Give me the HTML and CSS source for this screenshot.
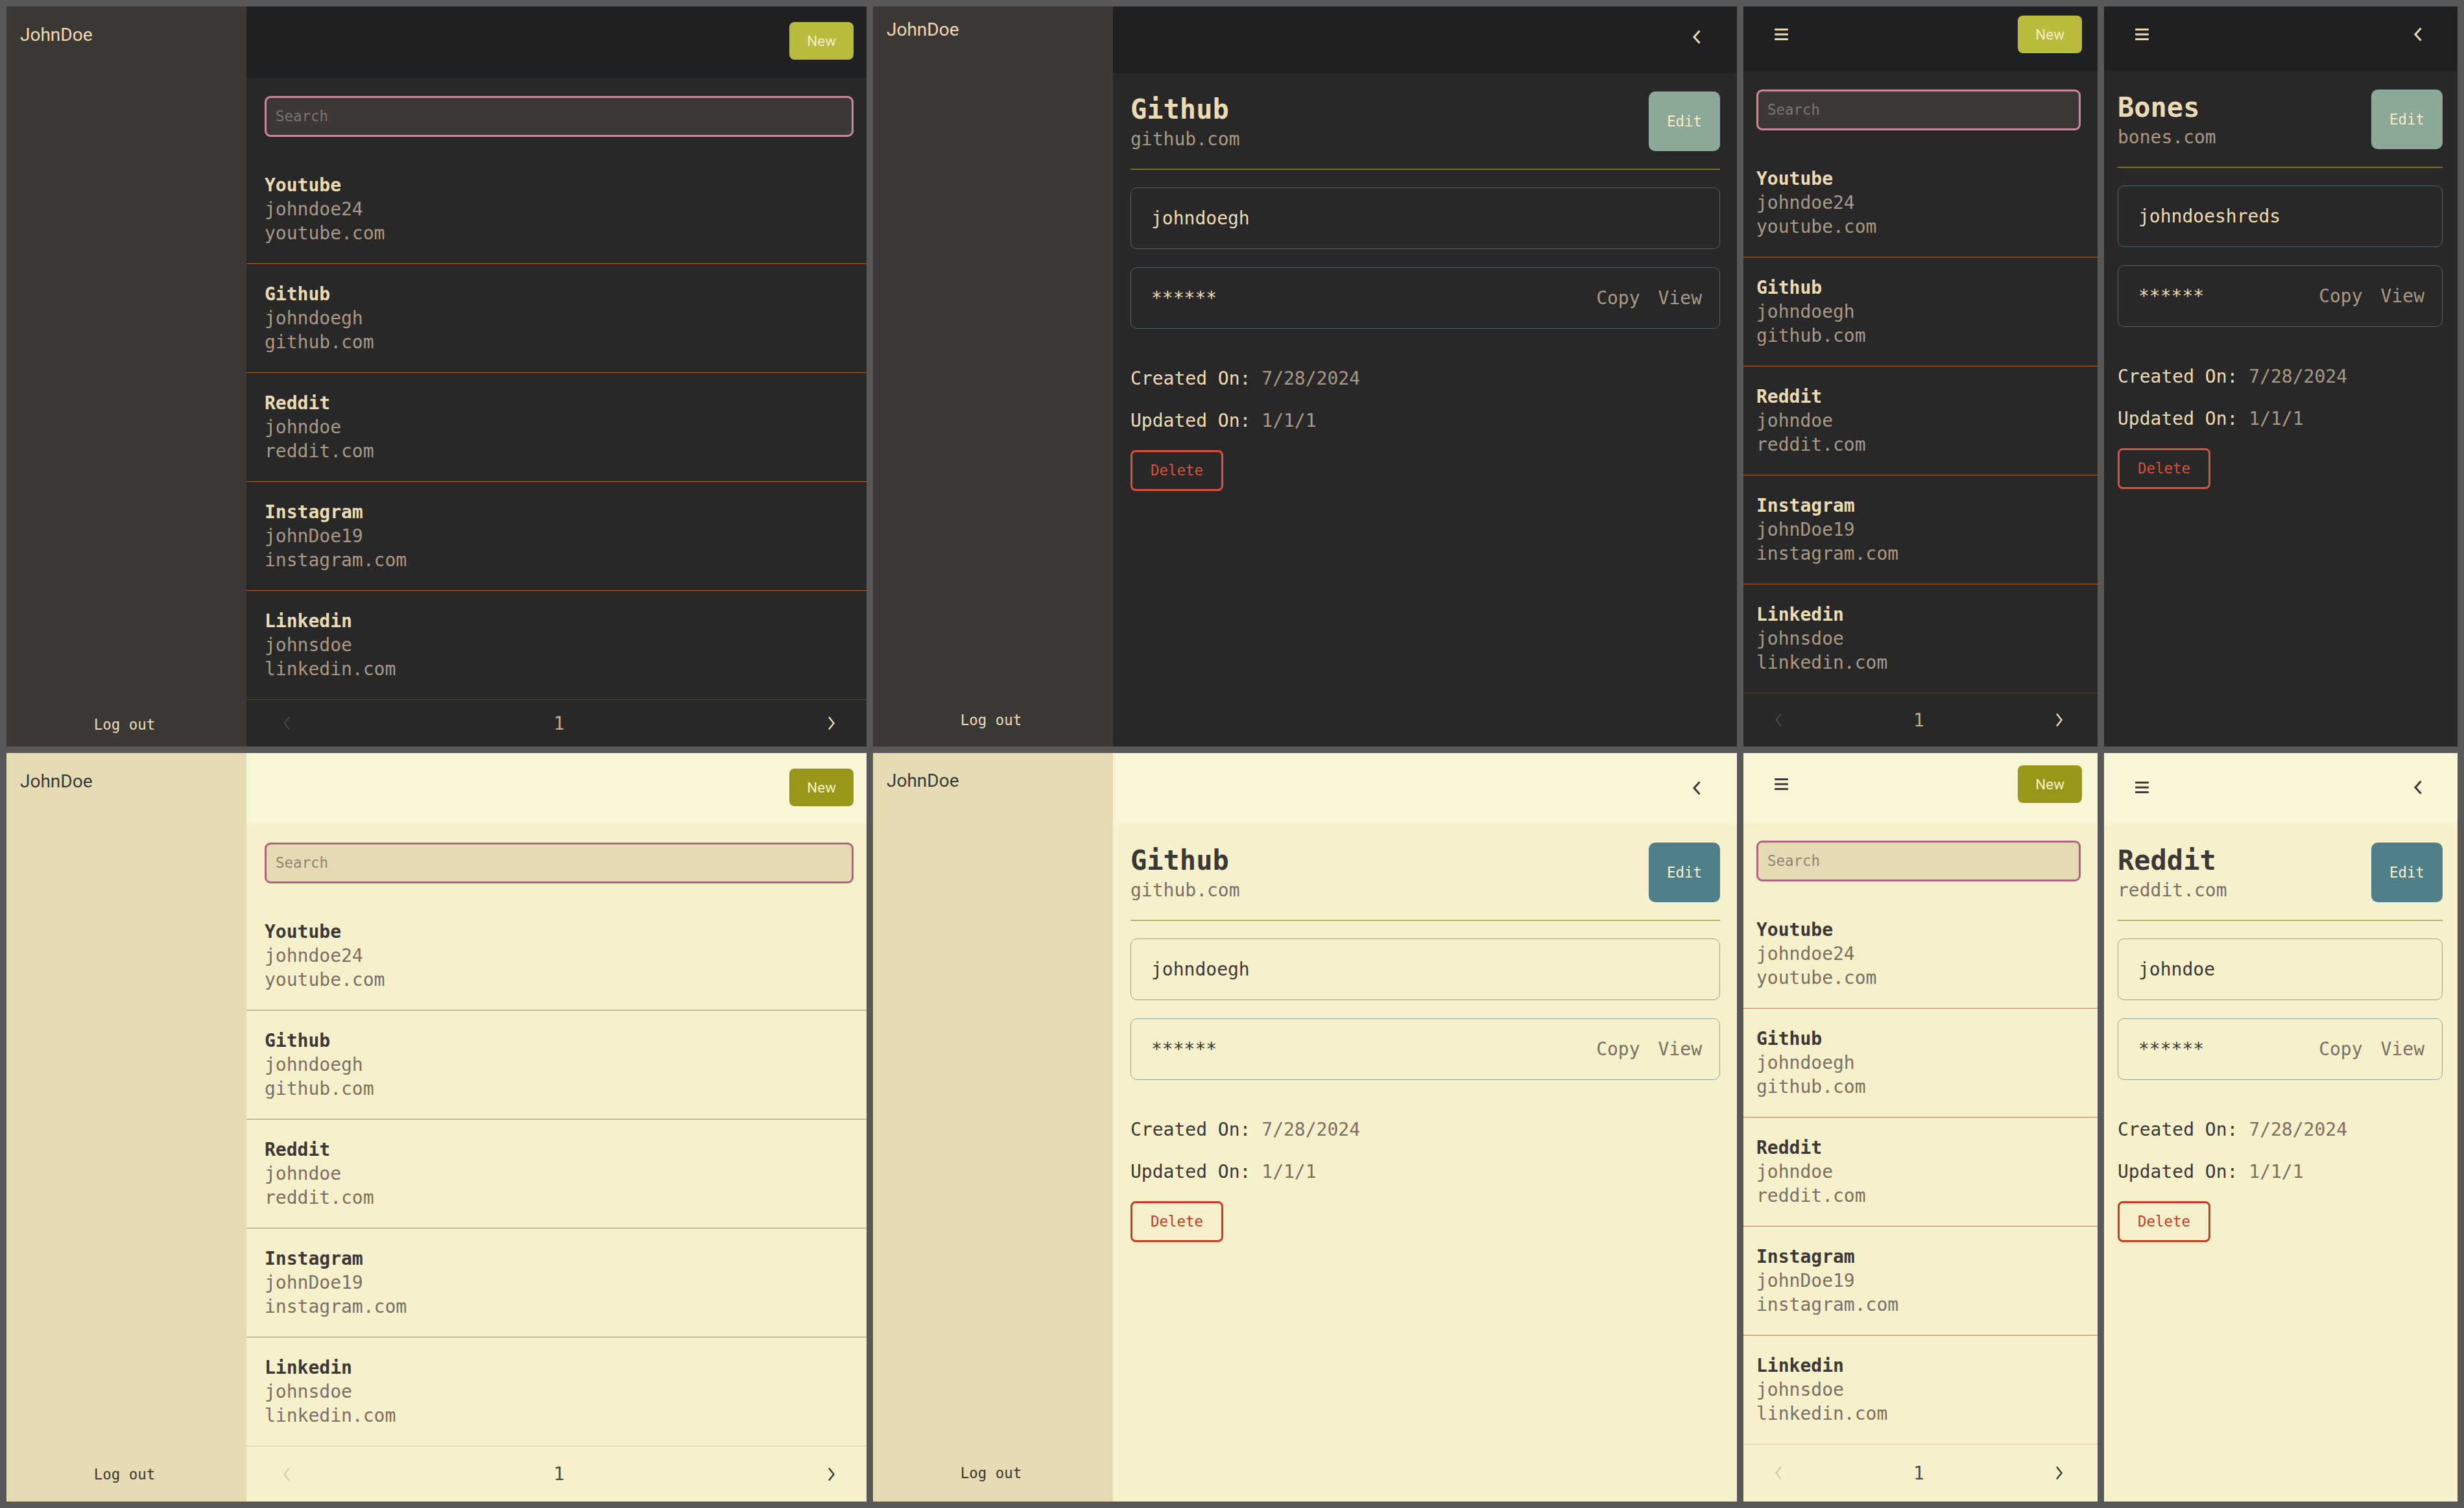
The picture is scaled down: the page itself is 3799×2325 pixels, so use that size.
FILE: index.html
```html
<!DOCTYPE html>
<html lang="en">
<head>
<meta charset="utf-8">
<title>Password manager</title>
<link rel="stylesheet" href="styles.css">
</head>
<body>
<div class="board">

  <!-- 1: dark desktop list -->
  <section class="app dark desk-list">
    <aside class="side"><div class="side__user">JohnDoe</div><div class="side__logout">Log out</div></aside>
    <div class="main">
      <header class="bar bar--end"><div class="bar__slot"><button class="btn btn--new">New</button></div></header>
      <div class="search"><div class="search__box">Search</div></div>
      <ul class="list">
        <li class="item"><div class="item__name">Youtube</div><div class="item__sub">johndoe24</div><div class="item__sub">youtube.com</div></li>
        <li class="item"><div class="item__name">Github</div><div class="item__sub">johndoegh</div><div class="item__sub">github.com</div></li>
        <li class="item"><div class="item__name">Reddit</div><div class="item__sub">johndoe</div><div class="item__sub">reddit.com</div></li>
        <li class="item"><div class="item__name">Instagram</div><div class="item__sub">johnDoe19</div><div class="item__sub">instagram.com</div></li>
        <li class="item"><div class="item__name">Linkedin</div><div class="item__sub">johnsdoe</div><div class="item__sub">linkedin.com</div></li>
      </ul>
      <nav class="pager">
        <span class="pager__prev"><svg width="12" height="22" viewBox="0 0 12 22"><path d="M10 1.5 L2.5 11 L10 20.5" fill="none" stroke="currentColor" stroke-width="2"/></svg></span>
        <span class="pager__num">1</span>
        <span class="pager__next"><svg width="12" height="22" viewBox="0 0 12 22"><path d="M2 1.5 L9.5 11 L2 20.5" fill="none" stroke="currentColor" stroke-width="2.4"/></svg></span>
      </nav>
    </div>
  </section>

  <!-- 2: dark desktop detail -->
  <section class="app dark desk-detail">
    <aside class="side"><div class="side__user">JohnDoe</div><div class="side__logout">Log out</div></aside>
    <div class="main">
      <header class="bar bar--end"><div class="bar__slot"><svg class="chev" width="14" height="22" viewBox="0 0 14 22"><path d="M11.5 1.5 L3 11 L11.5 20.5" fill="none" stroke="currentColor" stroke-width="3"/></svg></div></header>
      <div class="detail">
        <div class="detail__head">
          <div class="detail__titles"><div class="detail__title">Github</div><div class="detail__url">github.com</div></div>
          <button class="btn btn--edit">Edit</button>
        </div>
        <div class="divider"></div>
        <div class="field">johndoegh</div>
        <div class="field"><span>******</span><span class="field__actions"><span>Copy</span><span>View</span></span></div>
        <div class="meta">
          <div class="meta__row">Created On: <span class="meta__val">7/28/2024</span></div>
          <div class="meta__row">Updated On: <span class="meta__val">1/1/1</span></div>
        </div>
        <button class="btn btn--delete">Delete</button>
      </div>
    </div>
  </section>

  <!-- 3: dark mobile list -->
  <section class="app dark mob-list">
    <div class="main">
      <header class="bar"><div class="bar__slot"><svg class="burger" width="21" height="18" viewBox="0 0 21 18"><rect x="0" y="0" width="21" height="3" rx="1"/><rect x="0" y="7.5" width="21" height="3" rx="1"/><rect x="0" y="15" width="21" height="3" rx="1"/></svg></div><div class="bar__slot"><button class="btn btn--new">New</button></div></header>
      <div class="search"><div class="search__box">Search</div></div>
      <ul class="list">
        <li class="item"><div class="item__name">Youtube</div><div class="item__sub">johndoe24</div><div class="item__sub">youtube.com</div></li>
        <li class="item"><div class="item__name">Github</div><div class="item__sub">johndoegh</div><div class="item__sub">github.com</div></li>
        <li class="item"><div class="item__name">Reddit</div><div class="item__sub">johndoe</div><div class="item__sub">reddit.com</div></li>
        <li class="item"><div class="item__name">Instagram</div><div class="item__sub">johnDoe19</div><div class="item__sub">instagram.com</div></li>
        <li class="item"><div class="item__name">Linkedin</div><div class="item__sub">johnsdoe</div><div class="item__sub">linkedin.com</div></li>
      </ul>
      <nav class="pager">
        <span class="pager__prev"><svg width="12" height="22" viewBox="0 0 12 22"><path d="M10 1.5 L2.5 11 L10 20.5" fill="none" stroke="currentColor" stroke-width="2"/></svg></span>
        <span class="pager__num">1</span>
        <span class="pager__next"><svg width="12" height="22" viewBox="0 0 12 22"><path d="M2 1.5 L9.5 11 L2 20.5" fill="none" stroke="currentColor" stroke-width="2.4"/></svg></span>
      </nav>
    </div>
  </section>

  <!-- 4: dark mobile detail -->
  <section class="app dark mob-detail">
    <div class="main">
      <header class="bar"><div class="bar__slot"><svg class="burger" width="21" height="18" viewBox="0 0 21 18"><rect x="0" y="0" width="21" height="3" rx="1"/><rect x="0" y="7.5" width="21" height="3" rx="1"/><rect x="0" y="15" width="21" height="3" rx="1"/></svg></div><div class="bar__slot"><svg class="chev" width="14" height="22" viewBox="0 0 14 22"><path d="M11.5 1.5 L3 11 L11.5 20.5" fill="none" stroke="currentColor" stroke-width="3"/></svg></div></header>
      <div class="detail">
        <div class="detail__head">
          <div class="detail__titles"><div class="detail__title">Bones</div><div class="detail__url">bones.com</div></div>
          <button class="btn btn--edit">Edit</button>
        </div>
        <div class="divider"></div>
        <div class="field">johndoeshreds</div>
        <div class="field"><span>******</span><span class="field__actions"><span>Copy</span><span>View</span></span></div>
        <div class="meta">
          <div class="meta__row">Created On: <span class="meta__val">7/28/2024</span></div>
          <div class="meta__row">Updated On: <span class="meta__val">1/1/1</span></div>
        </div>
        <button class="btn btn--delete">Delete</button>
      </div>
    </div>
  </section>

  <!-- 5: light desktop list -->
  <section class="app light desk-list desk-list--low">
    <aside class="side"><div class="side__user">JohnDoe</div><div class="side__logout">Log out</div></aside>
    <div class="main">
      <header class="bar bar--end"><div class="bar__slot"><button class="btn btn--new">New</button></div></header>
      <div class="search"><div class="search__box">Search</div></div>
      <ul class="list">
        <li class="item"><div class="item__name">Youtube</div><div class="item__sub">johndoe24</div><div class="item__sub">youtube.com</div></li>
        <li class="item"><div class="item__name">Github</div><div class="item__sub">johndoegh</div><div class="item__sub">github.com</div></li>
        <li class="item"><div class="item__name">Reddit</div><div class="item__sub">johndoe</div><div class="item__sub">reddit.com</div></li>
        <li class="item"><div class="item__name">Instagram</div><div class="item__sub">johnDoe19</div><div class="item__sub">instagram.com</div></li>
        <li class="item"><div class="item__name">Linkedin</div><div class="item__sub">johnsdoe</div><div class="item__sub">linkedin.com</div></li>
      </ul>
      <nav class="pager">
        <span class="pager__prev"><svg width="12" height="22" viewBox="0 0 12 22"><path d="M10 1.5 L2.5 11 L10 20.5" fill="none" stroke="currentColor" stroke-width="2"/></svg></span>
        <span class="pager__num">1</span>
        <span class="pager__next"><svg width="12" height="22" viewBox="0 0 12 22"><path d="M2 1.5 L9.5 11 L2 20.5" fill="none" stroke="currentColor" stroke-width="2.4"/></svg></span>
      </nav>
    </div>
  </section>

  <!-- 6: light desktop detail -->
  <section class="app light desk-detail desk-detail--low">
    <aside class="side"><div class="side__user">JohnDoe</div><div class="side__logout">Log out</div></aside>
    <div class="main">
      <header class="bar bar--end"><div class="bar__slot"><svg class="chev" width="14" height="22" viewBox="0 0 14 22"><path d="M11.5 1.5 L3 11 L11.5 20.5" fill="none" stroke="currentColor" stroke-width="3"/></svg></div></header>
      <div class="detail">
        <div class="detail__head">
          <div class="detail__titles"><div class="detail__title">Github</div><div class="detail__url">github.com</div></div>
          <button class="btn btn--edit">Edit</button>
        </div>
        <div class="divider"></div>
        <div class="field">johndoegh</div>
        <div class="field"><span>******</span><span class="field__actions"><span>Copy</span><span>View</span></span></div>
        <div class="meta">
          <div class="meta__row">Created On: <span class="meta__val">7/28/2024</span></div>
          <div class="meta__row">Updated On: <span class="meta__val">1/1/1</span></div>
        </div>
        <button class="btn btn--delete">Delete</button>
      </div>
    </div>
  </section>

  <!-- 7: light mobile list -->
  <section class="app light mob-list mob-list--low">
    <div class="main">
      <header class="bar"><div class="bar__slot"><svg class="burger" width="21" height="18" viewBox="0 0 21 18"><rect x="0" y="0" width="21" height="3" rx="1"/><rect x="0" y="7.5" width="21" height="3" rx="1"/><rect x="0" y="15" width="21" height="3" rx="1"/></svg></div><div class="bar__slot"><button class="btn btn--new">New</button></div></header>
      <div class="search"><div class="search__box">Search</div></div>
      <ul class="list">
        <li class="item"><div class="item__name">Youtube</div><div class="item__sub">johndoe24</div><div class="item__sub">youtube.com</div></li>
        <li class="item"><div class="item__name">Github</div><div class="item__sub">johndoegh</div><div class="item__sub">github.com</div></li>
        <li class="item"><div class="item__name">Reddit</div><div class="item__sub">johndoe</div><div class="item__sub">reddit.com</div></li>
        <li class="item"><div class="item__name">Instagram</div><div class="item__sub">johnDoe19</div><div class="item__sub">instagram.com</div></li>
        <li class="item"><div class="item__name">Linkedin</div><div class="item__sub">johnsdoe</div><div class="item__sub">linkedin.com</div></li>
      </ul>
      <nav class="pager">
        <span class="pager__prev"><svg width="12" height="22" viewBox="0 0 12 22"><path d="M10 1.5 L2.5 11 L10 20.5" fill="none" stroke="currentColor" stroke-width="2"/></svg></span>
        <span class="pager__num">1</span>
        <span class="pager__next"><svg width="12" height="22" viewBox="0 0 12 22"><path d="M2 1.5 L9.5 11 L2 20.5" fill="none" stroke="currentColor" stroke-width="2.4"/></svg></span>
      </nav>
    </div>
  </section>

  <!-- 8: light mobile detail -->
  <section class="app light mob-detail mob-detail--low">
    <div class="main">
      <header class="bar"><div class="bar__slot"><svg class="burger" width="21" height="18" viewBox="0 0 21 18"><rect x="0" y="0" width="21" height="3" rx="1"/><rect x="0" y="7.5" width="21" height="3" rx="1"/><rect x="0" y="15" width="21" height="3" rx="1"/></svg></div><div class="bar__slot"><svg class="chev" width="14" height="22" viewBox="0 0 14 22"><path d="M11.5 1.5 L3 11 L11.5 20.5" fill="none" stroke="currentColor" stroke-width="3"/></svg></div></header>
      <div class="detail">
        <div class="detail__head">
          <div class="detail__titles"><div class="detail__title">Reddit</div><div class="detail__url">reddit.com</div></div>
          <button class="btn btn--edit">Edit</button>
        </div>
        <div class="divider"></div>
        <div class="field">johndoe</div>
        <div class="field"><span>******</span><span class="field__actions"><span>Copy</span><span>View</span></span></div>
        <div class="meta">
          <div class="meta__row">Created On: <span class="meta__val">7/28/2024</span></div>
          <div class="meta__row">Updated On: <span class="meta__val">1/1/1</span></div>
        </div>
        <button class="btn btn--delete">Delete</button>
      </div>
    </div>
  </section>

</div>
</body>
</html>
```

FILE: styles.css
```css
* { box-sizing: border-box; margin: 0; padding: 0; }

html, body { width: 3799px; height: 2325px; overflow: hidden; }

body {
  background: #585858;
  font-family: "DejaVu Sans Mono", "Liberation Mono", monospace;
  font-size: 28px;
  line-height: 37px;
}

.board {
  display: grid;
  grid-template-columns: 1326px 1332px 546px 545px;
  grid-template-rows: 1141px 1154px;
  gap: 10px;
  padding: 10px;
  height: 2325px;
}

/* themes */
.dark {
  --side: #3c3836;
  --head: #1f2022;
  --main: #282828;
  --fg: #ebdbb2;
  --muted: #a89984;
  --sep: #b0602c;
  --pager-line: #4e3f33;
  --pager-num: #bdae93;
  --pager-dim: #4f4945;
  --search-bg: #3c3836;
  --search-border: #c98a9e;
  --placeholder: #7c746c;
  --new: #b8bb3c;
  --new-fg: #f4edc9;
  --edit: #8ea898;
  --edit-fg: #f4ebc4;
  --olive: #77741c;
  --field: #4d6667;
  --red: #dc4f38;
}

.light {
  --side: #e5dcb3;
  --head: #f9f5d7;
  --main: #f6f0cb;
  --fg: #3c3836;
  --muted: #7c6f64;
  --sep: #b9805a;
  --pager-line: #d8c8a4;
  --pager-num: #504945;
  --pager-dim: #d5c6a1;
  --search-bg: #e5dbb3;
  --search-border: #b16286;
  --placeholder: #928374;
  --new: #98971a;
  --new-fg: #f7f0cc;
  --edit: #4f7f89;
  --edit-fg: #f7f0cc;
  --olive: #b5b06a;
  --field: #8fa7a2;
  --red: #cc3a26;
}

/* per-layout metrics */
.desk-list {
  --side-pt: 25px; --side-pb: 19px;
  --bar-h: 110px; --bar-pt: 24px; --bar-pr: 20px; --bar-pl: 28px;
  --pl: 28px; --pr: 20px;
  --pg-pl: 56px; --pg-pr: 48px;
}
.desk-list--low { --side-pb: 27px; }
.desk-detail {
  --side-pt: 17px; --side-pb: 26px;
  --bar-h: 103px; --bar-pt: 18px; --bar-pr: 55px; --bar-pl: 28px;
  --pl: 27px; --pr: 26px;
}
.desk-detail--low {
  --side-pt: 24px; --side-pb: 29px;
  --bar-h: 110px; --bar-pt: 25px;
}
.mob-list {
  --bar-h: 100px; --bar-pt: 14px; --bar-pr: 24px; --bar-pl: 48px;
  --pl: 20px; --pr: 26px;
  --pg-pl: 48px; --pg-pr: 53px;
}
.mob-list--low { --bar-h: 107px; --bar-pt: 19px; }
.mob-detail {
  --bar-h: 100px; --bar-pt: 14px; --bar-pr: 54px; --bar-pl: 48px;
  --pl: 21px; --pr: 23px;
}
.mob-detail--low { --bar-h: 110px; --bar-pt: 24px; }

.app {
  display: flex;
  overflow: hidden;
  background: var(--main);
  color: var(--fg);
}

/* sidebar */
.side {
  width: 370px;
  flex: none;
  background: var(--side);
  display: flex;
  flex-direction: column;
  justify-content: space-between;
  padding: var(--side-pt) 0 var(--side-pb) 0;
}
.side__user {
  font-family: Roboto, "Noto Sans", sans-serif;
  font-size: 28px;
  line-height: 37px;
  padding-left: 21px;
}
.side__logout {
  font-size: 22.4px;
  line-height: 29px;
  text-align: center;
  padding-right: 6px;
}

/* main column */
.main {
  flex: 1;
  min-width: 0;
  display: flex;
  flex-direction: column;
}

.bar {
  flex: none;
  height: var(--bar-h);
  background: var(--head);
  display: flex;
  justify-content: space-between;
  align-items: flex-start;
  padding: var(--bar-pt) var(--bar-pr) 0 var(--bar-pl);
}
.bar--end { justify-content: flex-end; }
.bar__slot {
  height: 58px;
  display: flex;
  align-items: center;
}
.burger { fill: var(--fg); display: block; }
.chev { color: var(--fg); display: block; }

/* buttons */
.btn {
  border: none;
  font: inherit;
  font-size: 22.4px;
  line-height: 30px;
  border-radius: 8px;
  cursor: pointer;
}
.btn--new {
  font-family: Roboto, "Noto Sans", sans-serif;
  background: var(--new);
  color: var(--new-fg);
  padding: 14px 27px;
  height: 58px;
}
.btn--edit {
  background: var(--edit);
  color: var(--edit-fg);
  padding: 0 28px;
  border-radius: 10px;
  display: flex;
  align-items: center;
}
.btn--delete {
  display: block;
  margin-top: 27px;
  background: transparent;
  border: 3px solid var(--red);
  color: var(--red);
  padding: 14px 28px;
  line-height: 29px;
}

/* search */
.search {
  flex: none;
  padding: 28px var(--pr) 28px var(--pl);
}
.search__box {
  height: 63px;
  border: 3px solid var(--search-border);
  border-radius: 9px;
  background: var(--search-bg);
  padding: 14px;
  font-size: 22.4px;
  line-height: 29px;
  color: var(--placeholder);
}

/* list */
.list { list-style: none; flex: none; }
.item {
  padding: 28px var(--pr) 28px var(--pl);
  border-bottom: 1px solid var(--sep);
}
.item:last-child { border-bottom: none; }
.item__name { font-weight: bold; }
.item__sub { color: var(--muted); }

/* pager */
.pager {
  flex: 1;
  border-top: 1px solid var(--pager-line);
  display: flex;
  align-items: center;
  justify-content: space-between;
  padding: 0 var(--pg-pr) 0 var(--pg-pl);
}
.pager svg { display: block; }
.pager__prev { color: var(--pager-dim); }
.pager__next { color: var(--fg); }
.pager__num { color: var(--pager-num); }

/* detail */
.detail {
  padding: 28px var(--pr) 0 var(--pl);
}
.detail__head {
  display: flex;
  justify-content: space-between;
  align-items: stretch;
}
.detail__title {
  font-size: 42px;
  line-height: 55px;
  font-weight: bold;
}
.detail__url { color: var(--muted); }
.divider {
  height: 2px;
  background: var(--olive);
  margin: 27px 0 27px;
}
.field {
  height: 95px;
  border: 1px solid var(--field);
  border-radius: 10px;
  padding: 28px 27px 28px 31px;
  display: flex;
  justify-content: space-between;
}
.field + .field { margin-top: 28px; }
.field__actions {
  display: flex;
  gap: 28px;
  color: var(--muted);
}
.meta { margin-top: 58px; }
.meta__row + .meta__row { margin-top: 28px; }
.meta__val { color: var(--muted); }
```
